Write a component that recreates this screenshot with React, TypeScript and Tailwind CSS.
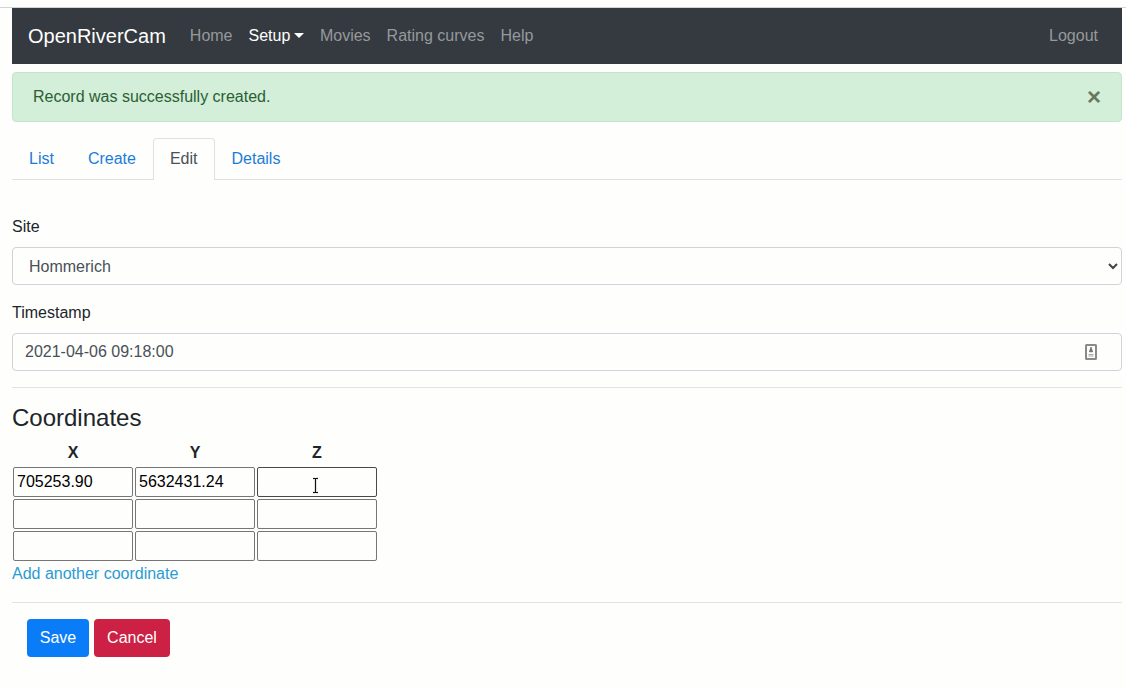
import React from 'react';

const navItems = [
  { label: 'Home' },
  { label: 'Setup', active: true },
  { label: 'Movies' },
  { label: 'Rating curves' },
  { label: 'Help' },
];

const tabs = ['List', 'Create', 'Edit', 'Details'];

const rows = [
  ['705253.90', '5632431.24', ''],
  ['', '', ''],
  ['', '', ''],
];

function Navbar() {
  return (
    <nav className="flex h-14 items-center bg-[#343a40] px-4">
      <a href="#" className="mr-4 text-[20px] leading-[30px] text-white">OpenRiverCam</a>
      <ul className="flex flex-1">
        {navItems.map((item) => (
          <li key={item.label} className="px-2">
            <a href="#" className={item.active ? 'flex items-center text-white' : 'text-[#96999c]'}>
              {item.label}
              {item.active && (
                <span className="ml-[3.6px] mt-[-2px] border-x-[5px] border-t-[5px] border-x-transparent border-t-white" />
              )}
            </a>
          </li>
        ))}
      </ul>
      <a href="#" className="px-2 text-[#96999c]">Logout</a>
    </nav>
  );
}

function IBeam() {
  return (
    <svg className="pointer-events-none absolute left-[54px] top-[10px]" width="9" height="17" viewBox="0 0 9 17" fill="none">
      <path d="M2 1.5h2M5 1.5h2M4.5 2v13M2 15.5h2M5 15.5h2" stroke="#e2e2e2" strokeWidth="3" />
      <path d="M2 1.5h5M4.5 2v13M2 15.5h5" stroke="#111" />
    </svg>
  );
}

export default function App() {
  return (
    <div className="h-[689px] overflow-hidden bg-[#fefefd] pt-[7px] text-[16px] leading-6 text-[#212529] [font-family:'Liberation_Sans',Arial,sans-serif]">
      <div className="h-px bg-[#d3d3d5]" />
      <div className="ml-3 mr-1">
        <Navbar />

        <div className="mt-2 flex h-[50px] items-center justify-between rounded border border-[#c3e6cb] bg-[#d3eed9] px-5 text-[#2a6033]">
          <span>Record was successfully created.</span>
          <button type="button" aria-label="Close" className="h-6 text-[24px] font-bold leading-6 text-[#69775f]">×</button>
        </div>

        <ul className="mt-4 flex h-[42px] border-b border-[#dee2e6]">
          {tabs.map((tab) => (
            <li
              key={tab}
              className={
                tab === 'Edit'
                  ? 'h-[42px] rounded-t border border-b-0 border-[#dee2e6] bg-[#fefefd] px-4 pt-2 text-[#495057]'
                  : 'h-[41px] border border-b-0 border-transparent px-4 pt-2 text-[#1c7cd9]'
              }
            >
              <a href="#">{tab}</a>
            </li>
          ))}
        </ul>

        <form className="pt-[35px]">
          <label htmlFor="site" className="mb-2 block">Site</label>
          <div className="relative">
            <select id="site" className="block h-[38px] w-full appearance-none rounded border border-[#ced4da] bg-transparent px-4 pt-[2px] text-[#495057]">
              <option>Hommerich</option>
            </select>
            <svg className="pointer-events-none absolute right-[4px] top-[15px]" width="10" height="8" viewBox="0 0 10 8" fill="none">
              <path d="M1 2l4 4 4-4" stroke="#40454a" strokeWidth="2" />
            </svg>
          </div>

          <label htmlFor="timestamp" className="mb-2 mt-4 block">Timestamp</label>
          <div className="relative">
            <input
              id="timestamp"
              defaultValue="2021-04-06 09:18:00"
              className="block h-[38px] w-full rounded border border-[#ced4da] bg-transparent px-3 text-[#495057]"
            />
            <svg className="absolute right-[25px] top-[11px]" width="12" height="16" viewBox="0 0 12 16" fill="none">
              <rect x="1" y="1" width="10" height="14" rx="0.5" stroke="#8a8a8a" strokeWidth="2" />
              <path d="M6 3v2M4.5 7.5h3" stroke="#777" strokeWidth="1.5" />
              <path d="M5 4.5h2l1 3.500H4z" fill="#777" />
              <path d="M3.500 10.500h5M3.500 12h5" stroke="#aaa" />
            </svg>
          </div>

          <hr className="mt-4 border-[#e3e3e4]" />

          <h4 className="mb-2 mt-4 text-[24px] leading-[28px]">Coordinates</h4>
          <table className="border-collapse">
            <thead>
              <tr>
                {['X', 'Y', 'Z'].map((axis) => (
                  <th key={axis} className="p-px text-center font-bold">{axis}</th>
                ))}
              </tr>
            </thead>
            <tbody>
              {rows.map((row, r) => (
                <tr key={r}>
                  {row.map((value, c) => (
                    <td key={c} className="p-px">
                      <div className="relative">
                        <input
                          defaultValue={value}
                          className={
                            r === 0 && c === 2
                              ? 'block h-[30px] w-[120px] rounded-[2px] border border-[#484848] px-[3px] text-black'
                              : 'block h-[30px] w-[120px] rounded-[2px] border border-[#767676] px-[3px] text-black'
                          }
                        />
                        {r === 0 && c === 2 && <IBeam />}
                      </div>
                    </td>
                  ))}
                </tr>
              ))}
            </tbody>
          </table>
          <a href="#" className="block text-[#2a9bd3]">Add another coordinate</a>

          <hr className="mt-4 border-[#e3e3e4]" />

          <div className="mt-4 flex gap-[5px] pl-[15px]">
            <button type="button" className="h-[38px] w-[62px] rounded bg-[#0b7cf8] pb-px text-white">Save</button>
            <button type="button" className="h-[38px] w-[76px] rounded bg-[#cc2144] pb-px text-white">Cancel</button>
          </div>
        </form>
      </div>
    </div>
  );
}
